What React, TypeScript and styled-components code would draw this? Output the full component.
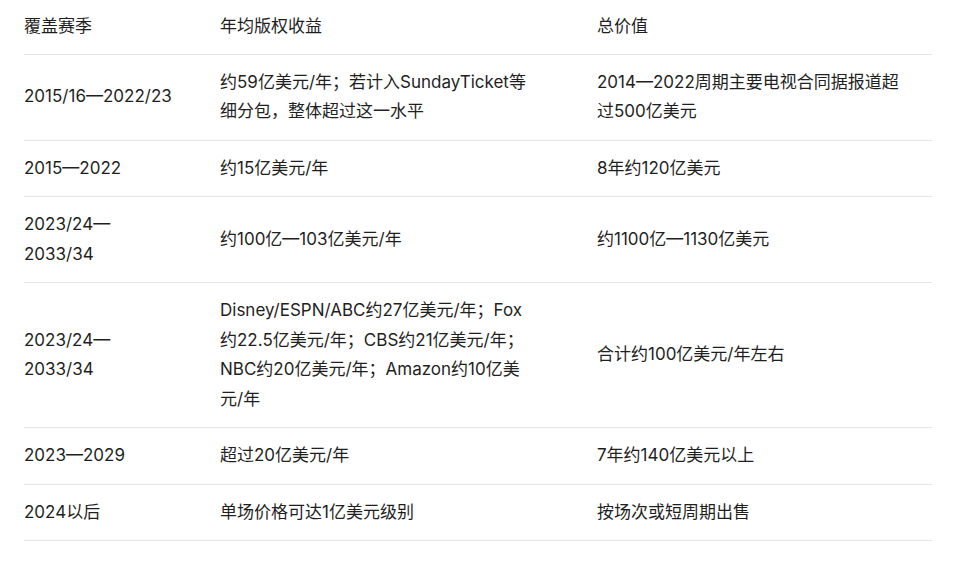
import styled, { createGlobalStyle } from "styled-components";

const GlobalStyle = createGlobalStyle`
    html, body {
        margin: 0;
        padding: 0;
        background: #ffffff;
    }
    body {
        font-family: "Inter", "Noto Sans CJK SC", sans-serif;
        color: #1f1f1f;
        -webkit-font-smoothing: antialiased;
    }
`

const Page = styled.div`
    padding: 0 28px 0 24px;
`

const Table = styled.div`
    display: flex;
    flex-direction: column;
    width: 908px;
`

const Row = styled.div`
    display: grid;
    grid-template-columns: 196px 377px 335px;
    align-items: center;
    border-bottom: 1px solid #e6e6e6;
`

const Cell = styled.div<{ $pad: number, $head?: boolean }>`
    font-size: 17px;
    line-height: 29.5px;
    padding: ${p => p.$head ? '12px' : '13px'} ${p => p.$pad}px ${p => p.$head ? '12px' : '13px'} 0;
    color: #1f1f1f;
`

// right padding per column, tuned so lines wrap where the source does
const pads = [45, 64, 24]

const header = ['覆盖赛季', '年均版权收益', '总价值']

const rows: string[][] = [
    ['2015/16—2022/23', '约59亿美元/年；若计入SundayTicket等细分包，整体超过这一水平', '2014—2022周期主要电视合同据报道超过500亿美元'],
    ['2015—2022', '约15亿美元/年', '8年约120亿美元'],
    ['2023/24—2033/34', '约100亿—103亿美元/年', '约1100亿—1130亿美元'],
    ['2023/24—2033/34', 'Disney/ESPN/ABC约27亿美元/年；Fox约22.5亿美元/年；CBS约21亿美元/年；NBC约20亿美元/年；Amazon约10亿美元/年', '合计约100亿美元/年左右'],
    ['2023—2029', '超过20亿美元/年', '7年约140亿美元以上'],
    ['2024以后', '单场价格可达1亿美元级别', '按场次或短周期出售'],
]

export default function App() {
    return (
        <>
            <GlobalStyle />
            <Page>
                <Table>
                    <Row>
                        {header.map((h, i) => <Cell key={i} $pad={pads[i]} $head>{h}</Cell>)}
                    </Row>
                    {rows.map((r, ri) => (
                        <Row key={ri}>
                            {r.map((c, ci) => <Cell key={ci} $pad={pads[ci]}>{c}</Cell>)}
                        </Row>
                    ))}
                </Table>
            </Page>
        </>
    );
}
